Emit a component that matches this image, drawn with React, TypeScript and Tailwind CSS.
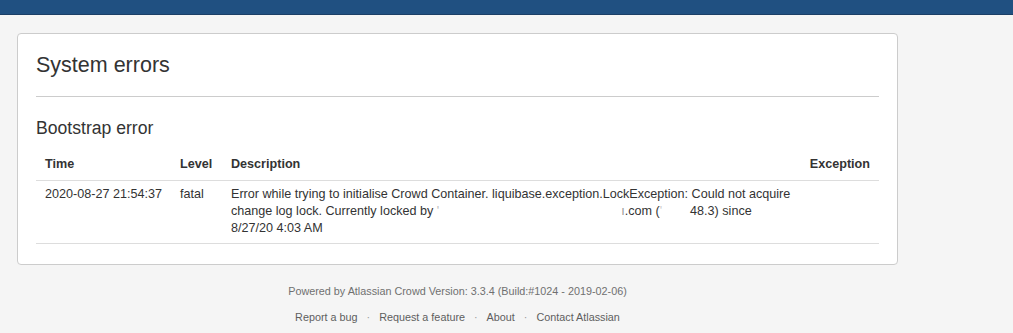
import React from "react";

const font = { fontFamily: '"Liberation Sans", Arial, sans-serif' };

function Redacted({ w }: { w: number }) {
  return <span className="inline-block" style={{ width: w }} />;
}

const links = ["Report a bug", "Request a feature", "About", "Contact Atlassian"];

export default function App() {
  return (
    <div className="min-h-[333px] bg-[#f5f5f5] text-[#333]" style={font}>
      <header className="h-[15px] border-b border-[#1b3f66] bg-[#205081]" />

      <div className="ml-[17px] mt-[18px] w-[881px]">
        <section className="rounded-[4px] border border-[#cccccc] bg-white px-[18px] pb-[20px] pt-[16px]">
          <h1 className="text-[21.5px] leading-[30px] font-normal">System errors</h1>
          <hr className="mt-[16px] border-t border-[#cccccc]" />

          <h2 className="mt-[19px] text-[17.6px] leading-[24px] font-normal">Bootstrap error</h2>

          <table className="mt-[8px] w-full table-fixed border-collapse text-[12.6px]">
            <colgroup>
              <col className="w-[135px]" />
              <col className="w-[51px]" />
              <col className="w-[579px]" />
              <col className="w-[78px]" />
            </colgroup>
            <thead>
              <tr className="border-b border-[#dddddd]">
                <th className="py-[8px] pl-[9px] text-left font-bold leading-[16px]">Time</th>
                <th className="py-[8px] pl-[9px] text-left font-bold leading-[16px]">Level</th>
                <th className="py-[8px] pl-[9px] text-left font-bold leading-[16px]">Description</th>
                <th className="py-[8px] pr-[9px] text-right font-bold leading-[16px]">Exception</th>
              </tr>
            </thead>
            <tbody>
              <tr className="border-b border-[#dddddd] align-top leading-[17px]">
                <td className="pb-[6px] pl-[9px] pt-[5px] whitespace-nowrap">2020-08-27 21:54:37</td>
                <td className="pb-[6px] pl-[9px] pt-[5px]">fatal</td>
                <td className="pb-[6px] pl-[9px] pt-[5px] whitespace-nowrap">
                  Error while trying to initialise Crowd Container. liquibase.exception.LockException: Could not acquire
                  <br />
                  change log lock. Currently locked by <span className="text-[#bbb]">'</span>
                  <Redacted w={182} />
                  <span className="text-[#999]">ı</span>.com (<span className="text-[#ccc]">'</span>
                  <Redacted w={28} />
                  48.3) since
                  <br />
                  8/27/20 4:03 AM
                </td>
                <td className="pb-[6px] pr-[9px] pt-[5px]" />
              </tr>
            </tbody>
          </table>
        </section>

        <footer className="mt-[18px] text-center text-[10.8px] leading-[16px] text-[#707070]">
          <p>Powered by Atlassian Crowd Version: 3.3.4 (Build:#1024 - 2019-02-06)</p>
          <ul className="mt-[10px] flex justify-center">
            {links.map((l, i) => (
              <li key={l} className="flex">
                {i > 0 && <span className="px-[9px] text-[#999]">·</span>}
                <a className="text-[#5e5e5e]">{l}</a>
              </li>
            ))}
          </ul>
        </footer>
      </div>
    </div>
  );
}
